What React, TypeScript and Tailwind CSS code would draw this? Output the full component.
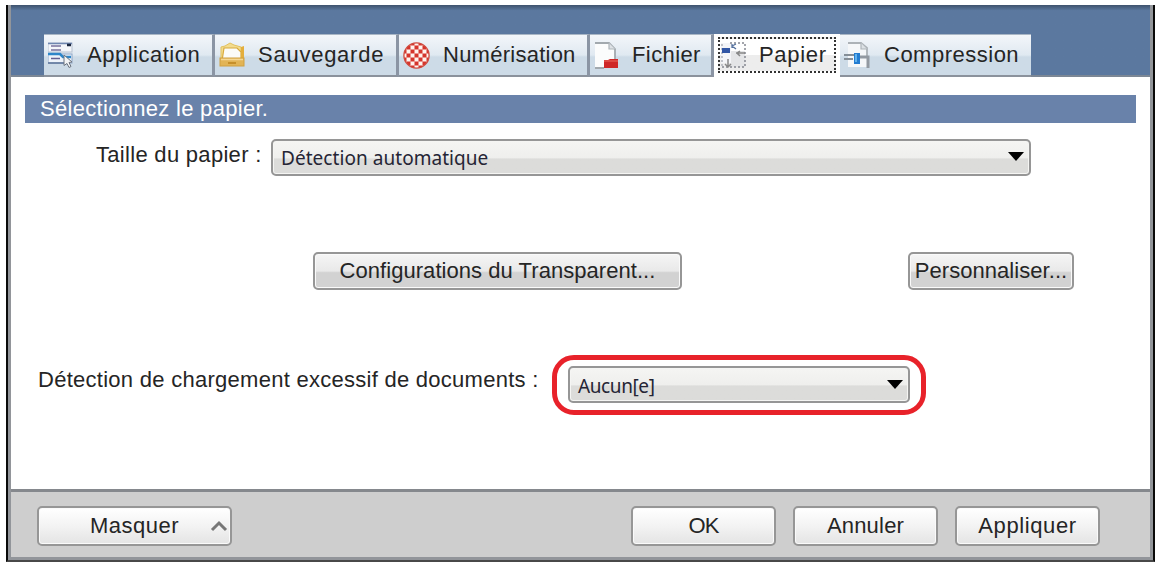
import type { ReactNode } from "react";

function ApplicationIcon() {
  return (
    <svg width="26" height="26" viewBox="0 0 26 26">
      <rect x="0" y="1" width="24" height="9" fill="#f4f6fa" stroke="#b5c0d0" strokeWidth="1" />
      <path d="M0 1.5h24" stroke="#6f87b0" strokeWidth="1.5" />
      <path d="M19 3h4" stroke="#1b2740" strokeWidth="2.5" />
      <path d="M3 4h10M3 8h10" stroke="#77729d" strokeWidth="1.5" />
      <rect x="0" y="12" width="24" height="9" fill="#eef3fa" stroke="#8da5c7" strokeWidth="1" />
      <path d="M0 12h12l3 3h8" fill="none" stroke="#2e86c9" strokeWidth="2.5" />
      <path d="M3 16.5h9" stroke="#635f91" strokeWidth="1.5" />
      <path d="M0 21h17" stroke="#5c7398" strokeWidth="1.5" />
      <path d="M16 13l8 7-3 .5 2 4-2 1-2-4-3 2z" fill="#f3f4f5" stroke="#6c7480" strokeWidth="1" />
    </svg>
  );
}

function FolderIcon() {
  return (
    <svg width="26" height="26" viewBox="0 0 26 26">
      <path d="M2 5l4-1 5-3 4 2 7 2v12H2z" fill="#f3dc8e" stroke="#e2c15f" strokeWidth="1" />
      <path d="M5 6h13l4 4v9H3z" fill="#fbfbf8" stroke="#d8a93c" strokeWidth="1.2" />
      <path d="M22 5l3-1v13l-3 3z" fill="#e4ae3c" />
      <rect x="1" y="16" width="24" height="8" fill="#e2b455" stroke="#d0a040" strokeWidth="1" />
      <path d="M2 17.5h22" stroke="#f4d794" strokeWidth="1.5" />
      <path d="M9 21h8" stroke="#bc831c" strokeWidth="1.5" />
    </svg>
  );
}

function CheckerIcon() {
  return (
    <svg width="27" height="27" viewBox="0 0 27 27">
      <defs>
        <pattern id="checker" width="8" height="8" patternUnits="userSpaceOnUse" x="3.5" y="3.5">
          <rect width="8" height="8" fill="#fff4ef" />
          <path d="M0 0h4v4H0zM4 4h4v4H4z" fill="#d5352c" />
        </pattern>
      </defs>
      <circle cx="13.5" cy="13.5" r="12.6" fill="url(#checker)" stroke="#cf4b3f" strokeWidth="1.3" />
    </svg>
  );
}

function FileIcon() {
  return (
    <svg width="26" height="27" viewBox="0 0 26 27">
      <path d="M1 1h14l6 6v19H1z" fill="#fbfcfc" />
      <path d="M1 1h14l6 6v10M1 26h9" fill="none" stroke="#a2a9ae" strokeWidth="1.8" />
      <path d="M15 1v6h6" fill="#dde1e5" stroke="#aeb5ba" strokeWidth="1.2" />
      <path d="M10 18h4l2-1h8v9H10z" fill="#cf2727" />
      <path d="M10 19h14" stroke="#e3544d" strokeWidth="1.5" />
    </svg>
  );
}

function PaperIcon() {
  return (
    <svg width="27" height="27" viewBox="0 0 27 27">
      <rect x="9" y="9" width="16" height="16" fill="#e4e5e7" />
      <path d="M1 1h10v20H1z" fill="#f4f5f8" />
      <path d="M10 1h15v24H2" fill="none" stroke="#858891" strokeWidth="1.5" strokeDasharray="2 2" />
      <path d="M2 2v22" stroke="#aeb2ba" strokeWidth="1.5" strokeDasharray="2 2" />
      <rect x="2" y="6" width="8" height="5" fill="#3156a5" />
      <path d="M12 2v4M12 4l4 3M12 4l4-2" fill="none" stroke="#54709d" strokeWidth="1.3" />
      <path d="M16 11h9M20 9l-3 2 3 3" fill="none" stroke="#888" strokeWidth="1.5" />
      <path d="M8 17v8M5 22l3 3 3-3" fill="none" stroke="#888" strokeWidth="1.5" />
    </svg>
  );
}

function CompressionIcon() {
  return (
    <svg width="27" height="27" viewBox="0 0 27 27">
      <path d="M4 1h13l6 6v18H4z" fill="#f5f7f9" />
      <path d="M4 1h13l6 5v8" fill="none" stroke="#acb2b7" strokeWidth="1.8" />
      <path d="M17 1v6h6" fill="#dce1e5" stroke="#aeb5ba" strokeWidth="1.2" />
      <path d="M0 13h11M0 17h9" stroke="#858e97" strokeWidth="1.8" />
      <path d="M15 15h9v11" fill="none" stroke="#9299a1" strokeWidth="3" />
      <path d="M10 11h6v11h-6z" fill="#227cd1" />
      <path d="M11 12h2v8h-2z" fill="#61b2ed" />
    </svg>
  );
}

const tabs = [
  { label: "Application", icon: <ApplicationIcon />, width: "w-[171px]", gap: "gap-[13px]", tracking: "tracking-[0.5px]" },
  { label: "Sauvegarde", icon: <FolderIcon />, width: "w-[184px]", gap: "gap-[13px]", tracking: "tracking-[0.75px]" },
  { label: "Numérisation", icon: <CheckerIcon />, width: "w-[191px]", gap: "gap-[13px]", tracking: "tracking-[0.25px]" },
  { label: "Fichier", icon: <FileIcon />, width: "w-[124px]", gap: "gap-[12px]", tracking: "tracking-[0.4px]" },
  { label: "Papier", icon: <PaperIcon />, width: "w-[126px]", gap: "gap-[12px]", tracking: "tracking-[0.7px]", active: true },
  { label: "Compression", icon: <CompressionIcon />, width: "w-[191px]", gap: "gap-[13px]", tracking: "tracking-[0.5px]" },
];

function Tab({ tab }: { tab: (typeof tabs)[number] }) {
  if (tab.active) {
    return (
      <div className={`h-[43px] shrink-0 bg-white pt-[3px] pl-[4px] ${tab.width}`}>
        <div className={`flex h-[36px] w-[118px] items-center border-2 border-dotted border-[#333] bg-linear-to-b from-white from-50% to-[#ededed] to-50% ${tab.gap}`}>
          {tab.icon}
          <span className={tab.tracking}>{tab.label}</span>
        </div>
      </div>
    );
  }

  return (
    <div
      className={`flex h-[43px] shrink-0 items-center border-t border-r-[3px] border-b-2 border-t-[#a9b6c5] border-r-[#8b95a4] border-b-[#8b929c] bg-linear-to-b from-[#f3f6fa] from-0% via-[#e0e9f1] via-50% to-[#cddbe7] to-55% pl-[4px] last:border-r-0 ${tab.width} ${tab.gap}`}
    >
      {tab.icon}
      <span className={tab.tracking}>{tab.label}</span>
    </div>
  );
}

function Button({ children, className }: { children: ReactNode; className: string }) {
  return (
    <button
      className={`flex shrink-0 items-center justify-center rounded-[5px] border-2 border-[#969696] whitespace-nowrap shadow-[inset_0_0_0_1px_#fafafa] ${className}`}
    >
      {children}
    </button>
  );
}

function Select({ value, className }: { value: string; className: string }) {
  return (
    <div
      className={`flex h-[37px] items-center justify-between rounded-[5px] border-2 border-[#969696] bg-linear-to-b from-[#f5f5f3] from-0% via-[#efefed] via-50% to-[#dcdcda] to-55% pl-2 font-['Noto_Sans',sans-serif] text-[19px] text-[#252535] shadow-[inset_0_0_0_1px_#f5f5f3] ${className}`}
    >
      <span className="pt-[3px]">{value}</span>
      <svg width="16" height="10" viewBox="0 0 16 10">
        <path d="M0 0h16L8 9z" fill="#000" />
      </svg>
    </div>
  );
}

export default function App() {
  return (
    <div className="h-[562px] w-[1157px] overflow-hidden bg-white pt-[5px] pl-[6px] font-['Liberation_Sans',sans-serif] text-[22px] leading-none text-[#252525]">
      <div className="h-[557px] w-[1149px] border-x-2 border-b-2 border-[#090909] border-b-[#484848]">
        <div className="flex h-full flex-col border-x-[3px] border-b-[3px] border-[#92959a] bg-white">
          <header className="flex h-[72px] shrink-0 items-end border-b-2 border-[#7c8795] bg-linear-to-b from-[#3e526d] via-[#5b789f] via-8% to-[#5b789f] pl-[33px]">
            <div className="-mb-[2px] flex h-[43px]">
              {tabs.map((tab) => (
                <Tab key={tab.label} tab={tab} />
              ))}
            </div>
          </header>

          <main className="flex h-[412px] shrink-0 flex-col pt-[18px]">
            <h2 className="mr-[14px] ml-[14px] flex h-[28px] shrink-0 items-center bg-[#6982aa] pl-[15px] tracking-[0.3px] text-white">
              Sélectionnez le papier.
            </h2>

            <div className="mt-[15px] flex h-[38px] shrink-0 items-center pl-[85px]">
              <span className="w-[175px] pb-[5px] tracking-[0.3px]">Taille du papier :</span>
              <Select value="Détection automatique" className="w-[760px] pr-[5px] tracking-[0.05px]" />
            </div>

            <div className="mt-[76px] flex h-[38px] shrink-0 pl-[302px]">
              <Button className="h-[38px] w-[369px] bg-linear-to-b from-[#f5f5f5] via-[#e9e9e9] via-50% to-[#d2d2d2] to-55% tracking-[0.05px]">
                Configurations du Transparent...
              </Button>
              <Button className="ml-[226px] h-[38px] w-[166px] bg-linear-to-b from-[#f5f5f5] via-[#e9e9e9] via-50% to-[#d2d2d2] to-55% tracking-[0.05px]">
                Personnaliser...
              </Button>
            </div>

            <div className="mt-[64px] flex h-[61px] shrink-0 items-center pl-[27px]">
              <span className="w-[514px] pb-[9px] tracking-[0.27px]">
                Détection de chargement excessif de documents :
              </span>
              <div className="flex h-[60px] w-[374px] items-center justify-center rounded-[22px] border-[5px] border-[#e8222a]">
                <Select value="Aucun[e]" className="w-[342px] pr-[5px] tracking-[-0.4px]" />
              </div>
            </div>
          </main>

          <footer className="flex flex-1 border-t-[3px] border-[#85888d] bg-[#cecece] pt-[14px] pl-[26px]">
            <Button className="relative h-[40px] w-[195px] bg-linear-to-b from-white via-[#f3f3f3] via-50% to-[#e4e4e4] tracking-[0.5px]">
              <span>Masquer</span>
              <svg className="absolute top-[12px] right-[2px]" width="18" height="12" viewBox="0 0 18 12">
                <path d="M2 10l7-7 7 7" fill="none" stroke="#777" strokeWidth="3" />
              </svg>
            </Button>
            <div className="ml-[399px] flex gap-[17px]">
              <Button className="h-[40px] w-[145px] bg-linear-to-b from-white via-[#f3f3f3] via-50% to-[#e4e4e4] tracking-[-1px]">
                OK
              </Button>
              <Button className="h-[40px] w-[145px] bg-linear-to-b from-white via-[#f3f3f3] via-50% to-[#e4e4e4] tracking-[0.2px]">
                Annuler
              </Button>
              <Button className="h-[40px] w-[145px] bg-linear-to-b from-white via-[#f3f3f3] via-50% to-[#e4e4e4] tracking-[0.6px]">
                Appliquer
              </Button>
            </div>
          </footer>
        </div>
      </div>
    </div>
  );
}
